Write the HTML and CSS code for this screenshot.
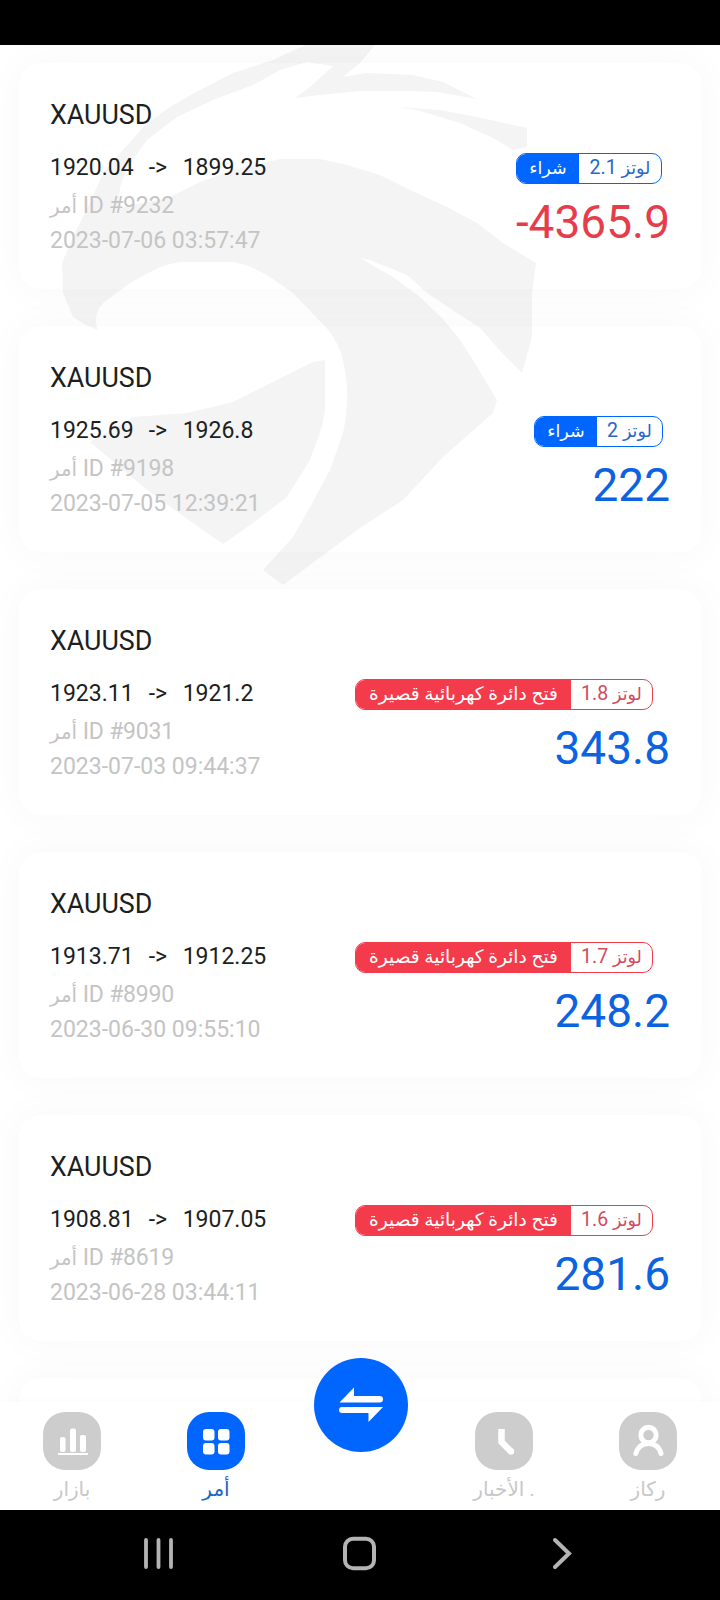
FILE: index.html
```
<!DOCTYPE html>
<html lang="ar">
<head>
    <meta charset="UTF-8">
    <meta name="viewport" content="width=device-width, initial-scale=1.0">
    <title>أمر</title>
    <link rel="stylesheet" href="styles.css">
</head>
<body>
    <div class="app">
        <div class="status-bar"></div>

        <main class="orders">
            <svg class="watermark" viewBox="0 45 720 560" width="720" height="560" fill="#f4f4f4">
                <path d="M305 45L273 60L233 73L200 90L173 105L147 123L123 150L103 173L90 203L73 237L62 263L63 293L73 317L86 325L98 330Q92 316 103 303L130 283L150 272Q165 264 180 262H233Q250 265 267 275L293 293L317 318Q335 335 341 353Q348 378 347 400Q346 420 343 433L330 470L310 507L293 537L263 570L283 585L360 528L403 500L443 457L493 413L497 400L473 360L460 340L443 319L420 297L393 277L360 258L370 260L407 275L427 293L457 313L480 328L503 354L522 373L532 337L532 293L536 263L503 243L477 223L447 207L410 190L380 175L347 165L320 159L280 159L233 170L200 182L168 198L118 208L120 187L127 168L147 140L177 117L213 100L253 85L280 70L307 62L333 66L310 87L295 98L320 95L360 91L413 91L437 92L477 99L443 82L413 75L367 73L343 77L360 63L375 45Z"/>
                <path d="M397 107L440 110L477 117L527 128L527 147L513 150L493 138L460 123L417 110Z"/>
                <path d="M325 360L313 362L267 385L233 402L187 413L133 417L90 442L147 490L200 528L223 544L253 523L287 497L310 460L322 427L325 410Z"/>
            </svg>

            <section class="card">
                <div class="details">
                    <h2>XAUUSD</h2>
                    <p class="prices"><span>1920.04</span><span class="arrow">-&gt;</span><span>1899.25</span></p>
                    <p class="order-id"><span class="ar">أمر</span> ID #9232</p>
                    <p class="date">2023-07-06 03:57:47</p>
                </div>
                <div class="result">
                    <div class="badge buy"><span class="side">شراء</span><span class="lots" dir="rtl"><span class="ar">لوتز</span> 2.1</span></div>
                    <div class="profit loss">-4365.9</div>
                </div>
            </section>

            <section class="card">
                <div class="details">
                    <h2>XAUUSD</h2>
                    <p class="prices"><span>1925.69</span><span class="arrow">-&gt;</span><span>1926.8</span></p>
                    <p class="order-id"><span class="ar">أمر</span> ID #9198</p>
                    <p class="date">2023-07-05 12:39:21</p>
                </div>
                <div class="result">
                    <div class="badge buy whole"><span class="side">شراء</span><span class="lots" dir="rtl"><span class="ar">لوتز</span> 2</span></div>
                    <div class="profit">222</div>
                </div>
            </section>

            <section class="card">
                <div class="details">
                    <h2>XAUUSD</h2>
                    <p class="prices"><span>1923.11</span><span class="arrow">-&gt;</span><span>1921.2</span></p>
                    <p class="order-id"><span class="ar">أمر</span> ID #9031</p>
                    <p class="date">2023-07-03 09:44:37</p>
                </div>
                <div class="result">
                    <div class="badge sell"><span class="side">فتح دائرة كهربائية قصيرة</span><span class="lots" dir="rtl"><span class="ar">لوتز</span> 1.8</span></div>
                    <div class="profit">343.8</div>
                </div>
            </section>

            <section class="card">
                <div class="details">
                    <h2>XAUUSD</h2>
                    <p class="prices"><span>1913.71</span><span class="arrow">-&gt;</span><span>1912.25</span></p>
                    <p class="order-id"><span class="ar">أمر</span> ID #8990</p>
                    <p class="date">2023-06-30 09:55:10</p>
                </div>
                <div class="result">
                    <div class="badge sell"><span class="side">فتح دائرة كهربائية قصيرة</span><span class="lots" dir="rtl"><span class="ar">لوتز</span> 1.7</span></div>
                    <div class="profit">248.2</div>
                </div>
            </section>

            <section class="card">
                <div class="details">
                    <h2>XAUUSD</h2>
                    <p class="prices"><span>1908.81</span><span class="arrow">-&gt;</span><span>1907.05</span></p>
                    <p class="order-id"><span class="ar">أمر</span> ID #8619</p>
                    <p class="date">2023-06-28 03:44:11</p>
                </div>
                <div class="result">
                    <div class="badge sell"><span class="side">فتح دائرة كهربائية قصيرة</span><span class="lots" dir="rtl"><span class="ar">لوتز</span> 1.6</span></div>
                    <div class="profit">281.6</div>
                </div>
            </section>

            <section class="card"></section>
        </main>

        <nav class="tabs">
            <a class="tab">
                <svg viewBox="0 0 58 58" fill="#fff">
                    <rect width="58" height="58" rx="22" fill="#cdcdcd"/>
                    <rect x="17" y="25" width="5.5" height="15" rx="2"/>
                    <rect x="27" y="16.5" width="6" height="23.5" rx="2"/>
                    <rect x="37" y="23" width="6" height="17" rx="2"/>
                    <rect x="15" y="41" width="30" height="2"/>
                </svg>
                <span>بازار</span>
            </a>
            <a class="tab active">
                <svg viewBox="0 0 58 58" fill="#fff">
                    <rect width="58" height="58" rx="22" fill="#0066ff"/>
                    <rect x="16" y="17" width="11.5" height="11.5" rx="3"/>
                    <rect x="31" y="17" width="11.5" height="11.5" rx="3"/>
                    <rect x="16" y="31" width="11.5" height="11.5" rx="3"/>
                    <rect x="31" y="31" width="11.5" height="11.5" rx="3"/>
                </svg>
                <span>أمر</span>
            </a>
            <a class="tab swap">
                <svg viewBox="0 0 94 94" fill="#fff">
                    <circle cx="47" cy="47" r="47" fill="#0066ff"/>
                    <path d="M25.500 44.500L40 29.500V38H65.500Q69 38 69 41.200T65.500 44.500Z"/>
                    <path d="M69 49L54.500 64V55H28Q25 55 25 52T28 49Z"/>
                </svg>
            </a>
            <a class="tab">
                <svg viewBox="0 0 58 58">
                    <rect width="58" height="58" rx="22" fill="#cdcdcd"/>
                    <path d="M26.500 17V30L36 39.500" fill="none" stroke="#fff" stroke-width="6.500"/>
                    <circle cx="36" cy="39.500" r="3.200" fill="#fff"/>
                </svg>
                <span class="news" dir="rtl">. الأخبار</span>
            </a>
            <a class="tab">
                <svg viewBox="0 0 58 58" fill="none" stroke="#fff" stroke-width="5" stroke-linecap="round">
                    <rect width="58" height="58" rx="22" fill="#cdcdcd" stroke="none"/>
                    <circle cx="29.500" cy="23" r="7.700"/>
                    <path d="M16.800 41.500C19 34.500 23.500 31.500 29.500 31.500S40 34.500 42 41.500"/>
                </svg>
                <span>ركاز</span>
            </a>
        </nav>

        <footer class="system-bar">
            <svg viewBox="0 0 720 90" fill="none" stroke="#b4b4b4" stroke-linecap="round">
                <path d="M146 30V57M158.500 30V57M171 30V57" stroke-width="3.800"/>
                <rect x="345" y="28.700" width="29" height="29.500" rx="8" stroke-width="4"/>
                <path d="M555 30L569 43.500L555 57" stroke-width="4"/>
            </svg>
        </footer>
    </div>
</body>
</html>
```
FILE: styles.css
```
* {
    box-sizing: border-box;
}
body {
    margin: 0;
    background: #fff;
    font-family: Roboto, "DejaVu Sans", sans-serif;
    color: #1c1f22;
}
.app {
    width: 720px;
    height: 1600px;
    display: flex;
    flex-direction: column;
    overflow: hidden;
}
.status-bar {
    height: 45px;
    flex: none;
    background: #000;
}
.orders {
    flex: 1;
    min-height: 0;
    position: relative;
    overflow: hidden;
    display: flex;
    flex-direction: column;
    gap: 37px;
    padding: 18px 18px 0 19px;
}
.watermark {
    position: absolute;
    top: 0;
    left: 0;
}
.card {
    position: relative;
    flex: none;
    height: 226px;
    padding: 31px 32px 0 31px;
    display: flex;
    justify-content: space-between;
    border-radius: 22px;
    box-shadow: 0 0 38px 4px rgba(0,0,0,0.026);
}
h2, p {
    margin: 0;
    font-weight: normal;
    white-space: nowrap;
}
h2 {
    font-size: 26.8px;
    line-height: 42px;
}
.prices {
    display: flex;
    margin-top: 14px;
    font-size: 23px;
    line-height: 36px;
}
.arrow {
    width: 49px;
    padding-left: 15px;
}
.order-id, .date {
    font-size: 23px;
    line-height: 35px;
    color: #c4c4c4;
}
.order-id {
    margin-top: 2px;
    margin-bottom: -1px;
    letter-spacing: -0.2px;
}
.ar {
    font-size: 0.9em;
}
.order-id .ar {
    font-size: 0.86em;
}
.result {
    display: flex;
    flex-direction: column;
    align-items: flex-end;
    padding-top: 59px;
}
.badge {
    display: flex;
    height: 31px;
    border: 1.5px solid #0066ff;
    border-radius: 10px;
    overflow: hidden;
    font-size: 20px;
    line-height: 27px;
    white-space: nowrap;
    color: #2a66c8;
}
.buy {
    width: 146px;
    margin-right: 8px;
}
.buy.whole {
    width: 129px;
    margin-right: 7px;
}
.sell {
    width: 298px;
    margin-right: 17px;
    border-color: #f33b4b;
    color: #d24a5c;
}
.side {
    width: 62px;
    background: #0066ff;
    color: #fff;
    font-size: 17.5px;
    line-height: 29px;
    text-align: center;
}
.sell .side {
    width: 215px;
    background: #f33b4b;
    font-size: 18.6px;
    line-height: 28px;
}
.lots {
    flex: 1;
    font-size: 19.5px;
    text-align: center;
}
.profit {
    margin-top: 11px;
    font-size: 46px;
    line-height: 54px;
    color: #0c63e0;
}
.profit.loss {
    color: #e63d4c;
}
.tabs {
    position: relative;
    flex: none;
    height: 108px;
    display: grid;
    grid-template-columns: repeat(5, 144px);
    background: #fff;
    box-shadow: 0 0 12px rgba(0,0,0,0.02);
}
.tab {
    display: flex;
    flex-direction: column;
    align-items: center;
    padding-top: 10px;
    font-size: 20px;
    line-height: 38px;
    color: #c8c8c8;
    white-space: nowrap;
}
.tab svg {
    width: 58px;
    height: 58px;
    flex: none;
}
.tab.active {
    color: #1a66c8;
}
.tab.swap {
    padding-top: 0;
    padding-left: 1px;
    margin-top: -44px;
}
.tab.swap svg {
    width: 94px;
    height: 94px;
}
.system-bar {
    height: 90px;
    flex: none;
    background: #000;
}
.system-bar svg {
    display: block;
}
```
